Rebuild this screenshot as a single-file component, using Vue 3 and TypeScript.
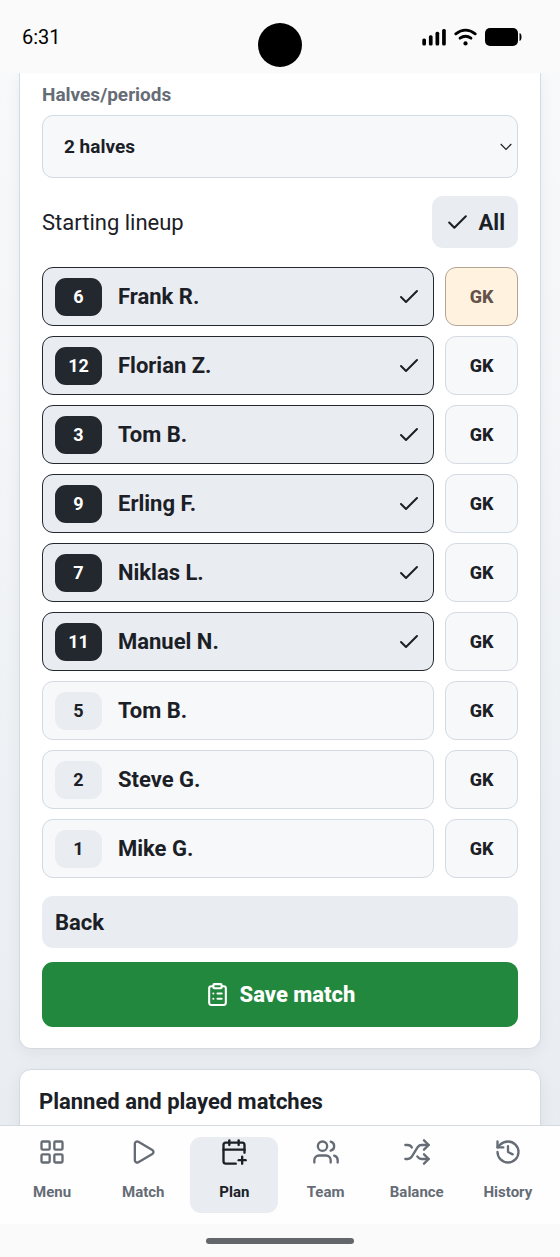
<script setup lang="ts">
import { ref } from 'vue'

interface Player {
  id: number
  num: number
  name: string
  starting: boolean
}

interface Tab {
  label: string
  paths: string[]
}

const periods = ref('2 halves')
const keeperId = ref(1)
const activeTab = ref('Plan')

const players = ref<Player[]>([
  { id: 1, num: 6, name: 'Frank R.', starting: true },
  { id: 2, num: 12, name: 'Florian Z.', starting: true },
  { id: 3, num: 3, name: 'Tom B.', starting: true },
  { id: 4, num: 9, name: 'Erling F.', starting: true },
  { id: 5, num: 7, name: 'Niklas L.', starting: true },
  { id: 6, num: 11, name: 'Manuel N.', starting: true },
  { id: 7, num: 5, name: 'Tom B.', starting: false },
  { id: 8, num: 2, name: 'Steve G.', starting: false },
  { id: 9, num: 1, name: 'Mike G.', starting: false },
])

const tabs: Tab[] = [
  {
    label: 'Menu',
    paths: [
      'M4 3h5a1 1 0 0 1 1 1v5a1 1 0 0 1-1 1H4a1 1 0 0 1-1-1V4a1 1 0 0 1 1-1z',
      'M15 3h5a1 1 0 0 1 1 1v5a1 1 0 0 1-1 1h-5a1 1 0 0 1-1-1V4a1 1 0 0 1 1-1z',
      'M15 14h5a1 1 0 0 1 1 1v5a1 1 0 0 1-1 1h-5a1 1 0 0 1-1-1v-5a1 1 0 0 1 1-1z',
      'M4 14h5a1 1 0 0 1 1 1v5a1 1 0 0 1-1 1H4a1 1 0 0 1-1-1v-5a1 1 0 0 1 1-1z',
    ],
  },
  {
    label: 'Match',
    paths: ['M5 5a2 2 0 0 1 3.008-1.728l11.997 6.998a2 2 0 0 1 .003 3.458l-12 7A2 2 0 0 1 5 19z'],
  },
  {
    label: 'Plan',
    paths: [
      'M16 19h6',
      'M16 2v4',
      'M19 16v6',
      'M21 12.598V6a2 2 0 0 0-2-2H5a2 2 0 0 0-2 2v14a2 2 0 0 0 2 2h8.5',
      'M3 10h18',
      'M8 2v4',
    ],
  },
  {
    label: 'Team',
    paths: [
      'M16 21v-2a4 4 0 0 0-4-4H6a4 4 0 0 0-4 4v2',
      'M16 3.128a4 4 0 0 1 0 7.744',
      'M22 21v-2a4 4 0 0 0-3-3.87',
      'M13 7a4 4 0 1 1-8 0a4 4 0 1 1 8 0z',
    ],
  },
  {
    label: 'Balance',
    paths: [
      'm18 14 4 4-4 4',
      'm18 2 4 4-4 4',
      'M2 18h1.973a4 4 0 0 0 3.3-1.7l5.454-8.6a4 4 0 0 1 3.3-1.7H22',
      'M2 6h1.972a4 4 0 0 1 3.6 2.2',
      'M22 18h-6.041a4 4 0 0 1-3.3-1.8l-.359-.45',
    ],
  },
  {
    label: 'History',
    paths: ['M3 12a9 9 0 1 0 9-9 9.75 9.75 0 0 0-6.74 2.74L3 8', 'M3 3v5h5', 'M12 7v5l4 2'],
  },
]

function selectAll() {
  players.value.forEach((p) => (p.starting = true))
}
</script>

<template>
  <div class="app">
    <header class="status">
      <span class="time">6:31</span>
      <span class="camera"></span>
      <span class="indicators">
        <svg width="24" height="18" viewBox="0 0 24 18" aria-hidden="true">
          <rect x="0.300" y="10.500" width="3.700" height="7" rx="1.500" />
          <rect x="6.900" y="7.200" width="3.700" height="10.300" rx="1.500" />
          <rect x="13.500" y="3.700" width="3.700" height="13.800" rx="1.500" />
          <rect x="20.100" y="1" width="3.700" height="16.500" rx="1.500" />
        </svg>
        <svg width="23" height="18" viewBox="0 0 23 18" fill="none" stroke="#000" stroke-width="2.8" stroke-linecap="round" aria-hidden="true">
          <path d="M1.8 5.8Q11.500 -1.600 21.200 5.800" />
          <path d="M6 10.200Q11.500 6.200 17 10.200" />
          <circle cx="11.500" cy="15.400" r="2.100" fill="#000" stroke="none" />
        </svg>
        <svg width="37" height="18" viewBox="0 0 37 18" aria-hidden="true">
          <rect x="0" y="0" width="33" height="18" rx="5" />
          <path d="M34.500 5q2 .6 2 4t-2 4z" />
        </svg>
      </span>
    </header>

    <main class="content">
      <section class="card form">
        <label class="field-label" for="periods">Halves/periods</label>
        <div class="select-wrap">
          <select id="periods" v-model="periods">
            <option>2 halves</option>
            <option>4 periods</option>
          </select>
          <svg class="chevron" width="12" height="8" viewBox="0 0 12 8" fill="none" stroke="currentColor" stroke-width="1.2" aria-hidden="true">
            <path d="M.7 1 6 6.300 11.300 1" />
          </svg>
        </div>

        <div class="lineup-head">
          <span class="lineup-title">Starting lineup</span>
          <button class="soft all" type="button" @click="selectAll">
            <svg class="icon" width="25" height="25" viewBox="0 0 24 24" aria-hidden="true"><path d="M20 6 9 17l-5-5" /></svg>
            <span>All</span>
          </button>
        </div>

        <ul class="players">
          <li v-for="p in players" :key="p.id">
            <button class="player" :class="{ on: p.starting }" type="button" :aria-pressed="p.starting" @click="p.starting = !p.starting">
              <span class="num">{{ p.num }}</span>
              <span class="name">{{ p.name }}</span>
              <svg v-if="p.starting" class="icon" width="24" height="24" viewBox="0 0 24 24" aria-hidden="true"><path d="M20 6 9 17l-5-5" /></svg>
            </button>
            <button class="gk" :class="{ keeper: keeperId === p.id }" type="button" :aria-pressed="keeperId === p.id" @click="keeperId = p.id">GK</button>
          </li>
        </ul>

        <button class="soft back" type="button">Back</button>
        <button class="save" type="button">
          <svg class="icon" width="25" height="25" viewBox="0 0 24 24" aria-hidden="true">
            <rect x="8" y="2" width="8" height="4" rx="1" />
            <path d="M16 4h2a2 2 0 0 1 2 2v14a2 2 0 0 1-2 2H6a2 2 0 0 1-2-2V6a2 2 0 0 1 2-2h2" />
            <path d="M12 11h4M12 16h4M8 11h.01M8 16h.01" />
          </svg>
          <span>Save match</span>
        </button>
      </section>

      <section class="card matches">
        <h2>Planned and played matches</h2>
      </section>
    </main>

    <nav class="tabs">
      <button v-for="t in tabs" :key="t.label" type="button" class="tab" :class="{ active: activeTab === t.label }" @click="activeTab = t.label">
        <svg class="icon" width="28" height="28" viewBox="0 0 24 24" aria-hidden="true">
          <path v-for="d in t.paths" :key="d" :d="d" />
        </svg>
        <span>{{ t.label }}</span>
      </button>
    </nav>
    <div class="home"><span></span></div>
  </div>
</template>

<style>
body {
  margin: 0;
}
</style>

<style scoped>
.app {
  display: flex;
  flex-direction: column;
  height: 100vh;
  overflow: hidden;
  font-family: Roboto, "Liberation Sans", sans-serif;
  color: #1b2026;
  background: #fafafa;
}
.app * {
  box-sizing: border-box;
}
button,
select {
  font: inherit;
  color: inherit;
  margin: 0;
  cursor: pointer;
}
.icon {
  display: block;
  flex: none;
  fill: none;
  stroke: currentColor;
  stroke-width: 2;
  stroke-linecap: round;
  stroke-linejoin: round;
}
.status {
  position: relative;
  flex: none;
  display: flex;
  align-items: center;
  justify-content: space-between;
  height: 73px;
  padding: 0 38px 0 22px;
  color: #000;
}
.time {
  font-size: 20px;
  line-height: 24px;
}
.camera {
  position: absolute;
  left: 50%;
  top: 23px;
  width: 44px;
  height: 44px;
  margin-left: -22px;
  border-radius: 50%;
  background: #000;
}
.indicators {
  display: flex;
  gap: 8px;
}
.indicators svg {
  display: block;
}
.content {
  flex: 1;
  min-height: 0;
  overflow: hidden;
  padding: 0 19px;
  background: linear-gradient(#f8f9fb, #e9edf1);
}
.card {
  border: 1px solid #d3dae2;
  border-radius: 12px;
  background: #fff;
  box-shadow: 0 4px 16px rgba(30, 40, 55, 0.06);
}
.form {
  display: flex;
  flex-direction: column;
  padding: 10px 22px 21px;
  border-top: 0;
  border-top-left-radius: 0;
  border-top-right-radius: 0;
}
.field-label {
  font-size: 19px;
  line-height: 24px;
  font-weight: 700;
  color: #656c75;
}
.select-wrap {
  position: relative;
  margin-top: 8px;
}
select {
  display: block;
  width: 100%;
  height: 63px;
  padding: 0 32px 0 21px;
  border: 1px solid #d3dae2;
  border-radius: 11px;
  background: #f7f8fa;
  font-size: 19px;
  font-weight: 700;
  appearance: none;
}
.chevron {
  position: absolute;
  right: 6px;
  top: 50%;
  margin-top: -4px;
  pointer-events: none;
}
.lineup-head {
  display: flex;
  align-items: center;
  justify-content: space-between;
  margin: 18px 0 19px;
}
.lineup-title {
  font-size: 22px;
}
.soft {
  display: flex;
  align-items: center;
  height: 52px;
  padding: 0 13px;
  border: 0;
  border-radius: 11px;
  background: #e9ecf1;
  font-size: 22px;
  font-weight: 700;
}
.all {
  gap: 9px;
}
.players {
  display: flex;
  flex-direction: column;
  gap: 10px;
  margin: 0 0 18px;
  padding: 0;
  list-style: none;
}
.players li {
  display: grid;
  grid-template-columns: 1fr 73px;
  gap: 11px;
}
.player,
.gk {
  height: 59px;
  border: 1px solid #d3dae2;
  border-radius: 11px;
  background: #f7f8fa;
  font-weight: 700;
}
.player {
  display: flex;
  align-items: center;
  gap: 16px;
  padding: 0 12px;
  font-size: 22px;
  text-align: left;
}
.player.on {
  border-color: #23282e;
  background: #e9ecf1;
}
.num {
  display: grid;
  place-items: center;
  width: 47px;
  height: 38px;
  border-radius: 11px;
  background: #e9ecf1;
  font-size: 18px;
}
.on .num {
  background: #23282e;
  color: #fff;
}
.name {
  flex: 1;
}
.gk {
  padding: 0;
  font-size: 18px;
  font-weight: 800;
}
.gk.keeper {
  border-color: #b5a597;
  background: #fff3e0;
  color: #66524a;
}
.save {
  display: flex;
  align-items: center;
  justify-content: center;
  gap: 10px;
  height: 65px;
  margin-top: 14px;
  border: 0;
  border-radius: 11px;
  background: #22883e;
  color: #fff;
  font-size: 22px;
  font-weight: 800;
}
.matches {
  margin-top: 20px;
  padding: 18px 19px 40px;
}
.matches h2 {
  margin: 0;
  font-size: 22px;
  line-height: 28px;
  font-weight: 700;
}
.tabs {
  flex: none;
  display: grid;
  grid-template-columns: repeat(6, 1fr);
  gap: 3px;
  padding: 11px 8px;
  border-top: 1px solid #d3dae2;
  background: #fefefe;
}
.tab {
  display: flex;
  flex-direction: column;
  align-items: center;
  gap: 16px;
  height: 76px;
  padding: 1px 0 0;
  border: 0;
  border-radius: 11px;
  background: transparent;
  color: #656c75;
  font-size: 15px;
  line-height: 20px;
  font-weight: 700;
}
.tab.active {
  background: #e9ecf1;
  color: #1b2026;
}
.home {
  flex: none;
  display: flex;
  justify-content: center;
  align-items: center;
  height: 33px;
}
.home span {
  width: 148px;
  height: 6px;
  border-radius: 3px;
  background: #63676b;
}
</style>
